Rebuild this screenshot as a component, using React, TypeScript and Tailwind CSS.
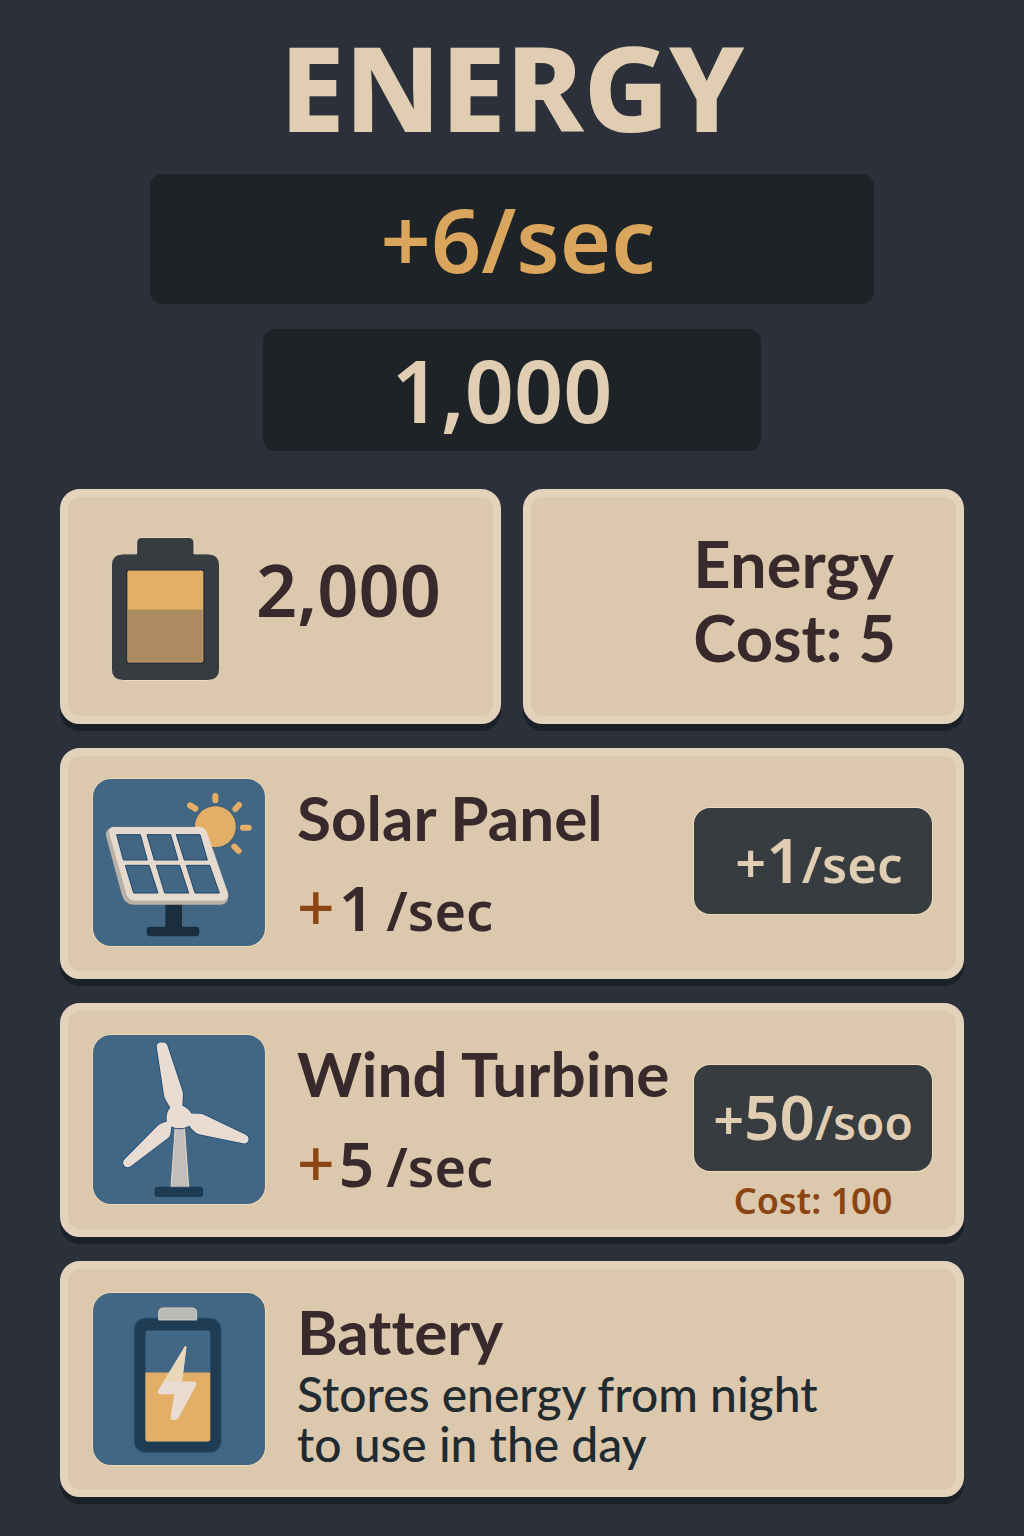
import type { ReactNode } from "react";

function BigBattery() {
  return (
    <svg viewBox="184 173 327 431" className="h-[144px] w-[109px] shrink-0 overflow-visible" aria-hidden="true">
      <path
        d="M277 174H417Q433 174 433 190V223H474Q510 223 510 259V567Q510 603 474 603H221Q185 603 185 567V259Q185 223 221 223H261V190Q261 174 277 174Z"
        fill="#363c3f"
        stroke="#eedcc0"
        strokeWidth="3"
      />
      <rect x="230" y="270" width="234" height="282" rx="7" fill="#17273a" />
      <rect x="233" y="273" width="228" height="276" rx="5" fill="#e3ae65" />
      <path d="M235 390H459V547H235Z" fill="#ac8b60" />
    </svg>
  );
}

function SolarIcon() {
  return (
    <svg viewBox="41 39 516 501" className="block h-[167px] w-full" aria-hidden="true">
      <g fill="#e3ae65">
        <circle cx="408" cy="182" r="63" stroke="#35597a" strokeWidth="3" />
        <g stroke="#e3ae65" strokeWidth="18" strokeLinecap="round">
          <path d="M408 90V103M332 118L348 128M479 117L468 129M491 185H508M465 242L478 255" />
        </g>
      </g>
      <path d="M258 410H308V482H350Q360 482 360 492V501Q360 511 350 511H212Q202 511 202 501V492Q202 482 212 482H258Z" fill="#1b2e3e" />
      <path
        d="M98 184Q76 192 80 210L128 388Q136 416 162 416H426Q447 414 446 390L380 200Z"
        fill="#b9b1a8"
      />
      <path
        d="M104 184H360Q376 184 382 200L445 382Q450 402 428 403H166Q150 403 144 388L91 202Q88 185 104 184Z"
        fill="#e6dace"
        stroke="#f1e3cf"
        strokeWidth="2"
      />
      <g fill="#426785" stroke="#1d456c" strokeWidth="3" strokeLinejoin="round">
        <path d="M112 206H183L204 282H132Z" />
        <path d="M203 206H274L296 282H225Z" />
        <path d="M291 206H362L384 282H315Z" />
        <path d="M138 298H209L236 381H163Z" />
        <path d="M231 298H301L328 381H256Z" />
        <path d="M321 298H391L420 381H347Z" />
      </g>
    </svg>
  );
}

function WindIcon() {
  return (
    <svg viewBox="41 38 516 506" className="block h-[169px] w-full" aria-hidden="true">
      <path d="M288 312H315L328 494H275Z" fill="#c1bebb" stroke="#e8d9c6" strokeWidth="3" />
      <rect x="227" y="494" width="143" height="28" rx="7" fill="#1d3b53" stroke="#17314a" strokeWidth="2" />
      <path
        d="M243 60H252Q261 60 264 69L308 202Q311 210 311 218L309 250Q326 256 336 273L361 274Q369 274 377 278L499 337Q508 341 508 349Q507 363 494 363L359 335Q345 332 330 310Q303 324 276 312L273 335Q271 343 265 347L154 431Q145 437 137 432Q128 423 133 413L233 312Q244 301 262 298Q259 269 273 256L259 232Q254 223 253 211L232 72Q232 62 243 60Z"
        fill="#e9ddd3"
        stroke="#1e4b75"
        strokeWidth="5"
        strokeLinejoin="round"
        paintOrder="stroke"
      />
    </svg>
  );
}

function BatteryIcon() {
  return (
    <svg viewBox="41 37 516 517" className="block h-[172px] w-full" aria-hidden="true">
      <rect x="164" y="112" width="262" height="405" rx="34" fill="#1e3d54" stroke="#2f5a7b" strokeWidth="3" />
      <path d="M238 118V96Q238 82 252 82H338Q352 82 352 96V118Z" fill="#b9b9b5" stroke="#d6cfc2" strokeWidth="3" />
      <rect x="198" y="150" width="195" height="333" rx="8" fill="#426785" />
      <path d="M198 276H393V475Q393 483 385 483H206Q198 483 198 475Z" fill="#e3ae65" />
      <path
        d="M317 197Q321 195 321 202L308 303H344Q354 305 350 315L298 411Q294 419 287 419H281Q272 418 274 408L285 341H242Q233 339 236 330Z"
        fill="#e9ddd3"
      />
      <path d="M317 197Q321 195 321 202L308 303H255Z" fill="#e8d8b8" />
    </svg>
  );
}

const panel =
  "rounded-[20px] border-8 border-[#e4d3bb] bg-[#dcc8ad] shadow-[0_7px_0_#1b2128] text-[#38292c]";
const figures = "font-['Noto_Sans',sans-serif] font-semibold";

function Rate({ amount }: { amount: string }) {
  return (
    <p className={`mt-[14px] flex h-[76px] items-baseline text-[62px] leading-[76px] ${figures}`}>
      <span className="text-[66px] leading-none font-medium text-[#8b4513]">+</span>
      <span className="ml-1">{amount}</span>
      <span className="ml-3 text-[54px] leading-none">/sec</span>
    </p>
  );
}

function Badge({ amount, unit, className }: { amount: string; unit: ReactNode; className: string }) {
  return (
    <button
      type="button"
      className={`flex h-[106px] w-[238px] items-center justify-center rounded-2xl bg-[#363c3f] text-[#e0cdb2] ring-1 ring-[#eedcc0] ${figures} ${className}`}
    >
      <span className="flex items-baseline pb-1 leading-none">
        <span className="text-[54px]">+</span>
        <span className="text-[62px]">{amount}</span>
        {unit}
      </span>
    </button>
  );
}

function Item({
  icon,
  title,
  children,
  aside,
  className,
}: {
  icon: ReactNode;
  title: string;
  children: ReactNode;
  aside?: ReactNode;
  className: string;
}) {
  return (
    <li className={`flex items-start pr-6 pb-2 pl-[25px] ${panel} ${className}`}>
      <div className="w-[172px] shrink-0 overflow-hidden rounded-[18px] bg-[#426785] ring-1 ring-[#eed9b6]">{icon}</div>
      <div className="ml-8 min-w-0 flex-1">
        <h2 className="text-[62px] leading-[76px] whitespace-nowrap [font-variant-ligatures:none]">{title}</h2>
        {children}
      </div>
      {aside}
    </li>
  );
}

export default function App() {
  return (
    <main className="min-h-screen bg-[#2c303b] px-[60px] pt-7 pb-9 font-['Lato',sans-serif] font-bold">
      <h1 className="text-center font-['Noto_Sans',sans-serif] text-[117px] leading-[118px] font-extrabold text-[#e0cdb2]">
        ENERGY
      </h1>

      <p
        className={`mx-auto mt-7 flex h-[130px] w-4/5 items-center justify-center rounded-xl bg-[#1d2327] pl-3 text-[88px] leading-none text-[#daa55d] ${figures}`}
      >
        +6/sec
      </p>
      <p
        className={`mx-auto mt-[25px] flex h-[122px] w-[55%] items-center justify-center rounded-xl bg-[#1d2327] pr-5 text-[86px] leading-none text-[#e0cdb2] ${figures}`}
      >
        1,000
      </p>

      <section className="mt-[38px] grid grid-cols-2 gap-[22px]">
        <div className={`flex h-[235px] items-center gap-9 pt-1 pl-[43px] ${panel}`}>
          <BigBattery />
          <p className={`pb-10 text-[72px] leading-none ${figures}`}>2,000</p>
        </div>
        <div className={`flex h-[235px] items-center justify-end pr-[60px] pb-[14px] ${panel}`}>
          <p className="text-[65px] leading-[74px]">
            Energy
            <br />
            Cost: 5
          </p>
        </div>
      </section>

      <ul className="mt-6 flex flex-col gap-6">
        <Item
          icon={<SolarIcon />}
          title="Solar Panel"
          className="min-h-[231px] pt-[23px]"
          aside={<Badge amount="1" unit={<span className="text-[51px]">/sec</span>} className="mt-[29px] pl-3" />}
        >
          <Rate amount="1" />
        </Item>
        <Item
          icon={<WindIcon />}
          title="Wind Turbine"
          className="min-h-[234px] pt-6"
          aside={
            <div className="mt-[30px] text-center">
              <Badge amount="50" unit={<span className="text-[46px]">/soo</span>} className="" />
              <p className={`mt-[10px] text-[36px] leading-10 text-[#8b4513] ${figures}`}>Cost: 100</p>
            </div>
          }
        >
          <Rate amount="5" />
        </Item>
        <Item icon={<BatteryIcon />} title="Battery" className="min-h-[236px] pt-6">
          <p className="max-w-[560px] text-[48px] leading-[50px] font-medium text-[#1f2b31]">
            Stores energy from night to use in the day
          </p>
        </Item>
      </ul>
    </main>
  );
}
